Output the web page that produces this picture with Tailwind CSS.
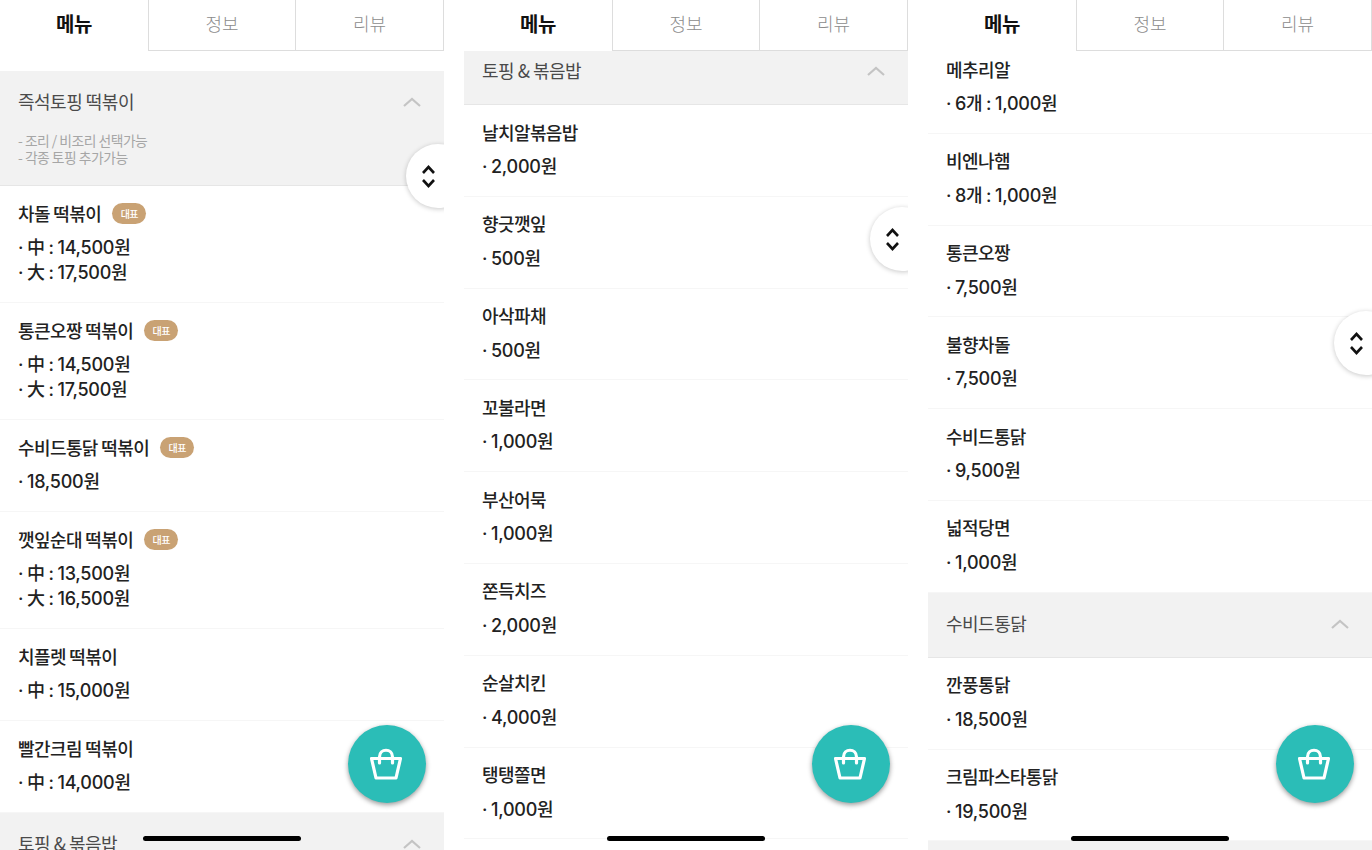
<!DOCTYPE html>
<html>
<head>
<title>메뉴</title>
<meta charset="UTF-8">
<meta name="viewport" content="width=device-width, initial-scale=1.0">
<script src="https://cdn.jsdelivr.net/npm/@tailwindcss/browser@4"></script>
<style>
  body {
    font-family: 'Noto Sans CJK KR', 'Noto Sans', sans-serif;
  }
  .price {
    font-family: 'Inter', 'Noto Sans CJK KR', sans-serif;
    word-spacing: -0.8px;
  }
</style>
</head>
<body class="bg-white overflow-hidden">

  <div id="screens" class="flex gap-5 w-[1372px] h-[850px]"></div>

  <script>
    const screens = [
      {
        listClass: 'mt-5',
        scrollClass: 'top-[144px]',
        rows: [
          { section: '즉석토핑 떡볶이', notes: ['- 조리 / 비조리 선택가능', '- 각종 토핑 추가가능'] },
          { name: '차돌 떡볶이', badge: true, prices: ['· 中 : 14,500원', '· 大 : 17,500원'] },
          { name: '통큰오짱 떡볶이', badge: true, prices: ['· 中 : 14,500원', '· 大 : 17,500원'] },
          { name: '수비드통닭 떡볶이', badge: true, prices: ['· 18,500원'] },
          { name: '깻잎순대 떡볶이', badge: true, prices: ['· 中 : 13,500원', '· 大 : 16,500원'] },
          { name: '치플렛 떡볶이', prices: ['· 中 : 15,000원'] },
          { name: '빨간크림 떡볶이', prices: ['· 中 : 14,000원'] },
          { section: '토핑 & 볶음밥' }
        ]
      },
      {
        listClass: '-mt-[11px]',
        scrollClass: 'top-[207px]',
        rows: [
          { section: '토핑 & 볶음밥' },
          { name: '날치알볶음밥', prices: ['· 2,000원'] },
          { name: '향긋깻잎', prices: ['· 500원'] },
          { name: '아삭파채', prices: ['· 500원'] },
          { name: '꼬불라면', prices: ['· 1,000원'] },
          { name: '부산어묵', prices: ['· 1,000원'] },
          { name: '쫀득치즈', prices: ['· 2,000원'] },
          { name: '순살치킨', prices: ['· 4,000원'] },
          { name: '탱탱쫄면', prices: ['· 1,000원'] }
        ]
      },
      {
        listClass: '-mt-[9px]',
        scrollClass: 'top-[311px]',
        rows: [
          { name: '메추리알', prices: ['· 6개 : 1,000원'] },
          { name: '비엔나햄', prices: ['· 8개 : 1,000원'] },
          { name: '통큰오짱', prices: ['· 7,500원'] },
          { name: '불향차돌', prices: ['· 7,500원'] },
          { name: '수비드통닭', prices: ['· 9,500원'] },
          { name: '넓적당면', prices: ['· 1,000원'] },
          { section: '수비드통닭' },
          { name: '깐풍통닭', prices: ['· 18,500원'] },
          { name: '크림파스타통닭', prices: ['· 19,500원'] },
          { section: '' }
        ]
      }
    ];

    const chevronUp = `
      <svg class="absolute right-[23px] top-[26px] w-[18px] h-[10px]" viewBox="0 0 18 10" fill="none" stroke="#c4c4c4" stroke-width="2.2">
        <path d="M1 9 L9 2 L17 9"/>
      </svg>`;

    function sectionRow(row) {
      const notes = row.notes
        ? `<div class="mt-[18px] text-[13.8px] leading-[17px] text-[#a6a6a6] tracking-[-0.5px]">${row.notes.join('<br>')}</div>`
        : '';
      return `
        <div class="relative bg-[#f2f2f2] border-b border-[#e6e6e6] px-[18px] pt-[17px] ${row.notes ? 'h-[115px]' : 'h-[65px]'}">
          <div class="text-[18px] leading-[26px] text-[#4a4a4a] tracking-[-0.5px]">${row.section}</div>
          ${notes}
          ${chevronUp}
        </div>`;
    }

    function itemRow(row) {
      const badge = row.badge
        ? `<span class="ml-[11px] flex items-center justify-center w-[34px] h-[21px] rounded-full bg-[#c9a274] text-[10px] text-white">대표</span>`
        : '';
      return `
        <div class="border-b border-[#f6f6f6] px-[18px] pt-[14px] ${row.prices.length > 1 ? 'h-[117.2px]' : 'h-[91.8px]'}">
          <div class="flex items-center h-[26px] text-[18px] font-medium text-[#222222] tracking-[-0.6px]">${row.name}${badge}</div>
          <div class="price mt-[9px] text-[18px] leading-[25px] font-medium text-[#222222] tracking-[-0.25px]">${row.prices.join('<br>')}</div>
        </div>`;
    }

    const html = screens.map(screen => `
      <div class="relative w-[444px] h-[850px] overflow-hidden bg-white">
        <div class="relative z-10 flex h-[51px] bg-white">
          <div class="w-[148px] flex items-center justify-center pb-[3px] text-[20px] font-bold text-[#111111] tracking-[-0.5px]">메뉴</div>
          <div class="w-[147px] flex items-center justify-center pb-[3px] border-l border-b border-[#dddddd] text-[18px] font-light text-[#8c8c8c]">정보</div>
          <div class="w-[149px] flex items-center justify-center pb-[3px] border-l border-r border-b border-[#dddddd] text-[18px] font-light text-[#8c8c8c]">리뷰</div>
        </div>
        <div class="${screen.listClass}">
          ${screen.rows.map(row => row.section !== undefined ? sectionRow(row) : itemRow(row)).join('')}
        </div>

        <div class="absolute ${screen.scrollClass} left-[406px] w-[64px] h-[64px] rounded-full bg-white z-20 shadow-[0_1px_5px_rgba(0,0,0,0.22)]">
          <svg class="absolute left-[15px] top-[20px] w-[15px] h-[25px]" viewBox="0 0 15 25" fill="none" stroke="#111111" stroke-width="2.6">
            <path d="M2 9 L7.5 3 L13 9"/>
            <path d="M2 16 L7.5 22 L13 16"/>
          </svg>
        </div>

        <div class="absolute left-[348px] top-[725px] w-[78px] h-[78px] rounded-full bg-[#2bbdb7] z-20 flex items-center justify-center shadow-[0_2px_5px_rgba(0,0,0,0.4)]">
          <svg class="w-[32px] h-[32px] mr-[2px]" viewBox="0 0 32 32" fill="none" stroke="white" stroke-width="3.2" stroke-linejoin="round" stroke-linecap="round">
            <path d="M1.5 10.5 H30.5 L26 30 H6 Z"/>
            <path d="M9.5 15 V9 C9.5 0 22.5 0 22.5 9 V15"/>
          </svg>
        </div>

        <div class="absolute left-[143px] top-[836px] w-[158px] h-[5px] rounded-full bg-black z-30"></div>
      </div>
    `).join('');

    document.getElementById('screens').innerHTML = html;
  </script>
</body>
</html>
